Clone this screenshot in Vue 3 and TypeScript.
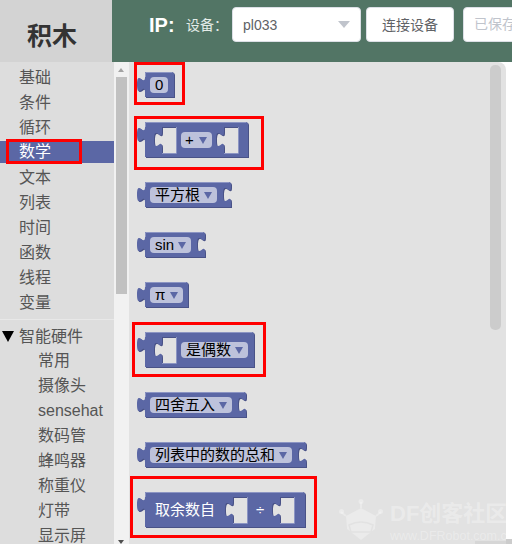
<template>
  <div class="page">
    <header class="topbar">
      <div class="logo">积木</div>
      <div class="tools">
        <span class="ip">IP:</span>
        <span class="device-label">设备：</span>
        <div class="select">
          <span>pl033</span>
          <i class="caret"></i>
        </div>
        <button class="btn">连接设备</button>
        <div class="saved">已保存</div>
      </div>
    </header>

    <div class="main">
      <aside class="side">
        <ul class="cats">
          <li v-for="c in categories" :key="c" class="cat" :class="{ active: c === '数学' }">
            {{ c }}
            <i v-if="c === '数学'" class="mark"></i>
          </li>
        </ul>
        <div class="group-title"><i class="tri"></i>智能硬件</div>
        <ul class="subs">
          <li v-for="s in hardware" :key="s" class="sub">{{ s }}</li>
        </ul>
      </aside>

      <div class="side-scroll">
        <i class="arrow up"></i>
        <div class="side-thumb"></div>
        <i class="arrow down"></i>
      </div>

      <section class="flyout">
        <div v-for="b in blocks" :key="b.id" class="block">
          <svg :width="b.w + 2" :height="b.h" class="block-svg">
            <path :d="blockPath(b)" fill="#495287" fill-rule="evenodd" transform="translate(1 1)" />
            <path :d="blockPath(b)" fill="#5b67a5" fill-rule="evenodd" />
            <path :d="lightPath(b)" fill="none" stroke="#8c95c3" />
            <g v-for="f in b.fields" :key="f.x">
              <rect :x="f.x" :y="(b.h - 16) / 2" :width="f.w" height="16" rx="4" fill="#bdc2db" />
              <text :x="f.tx ?? f.x + 5" :y="b.h / 2 + 5" class="field-text">{{ f.text }}</text>
              <path v-if="f.arrow" :d="arrow(f, b)" fill="#5b67a5" />
            </g>
            <text v-for="l in b.labels" :key="l.x" :x="l.x" :y="b.h / 2 + 5" class="label-text">{{ l.text }}</text>
          </svg>
          <i v-if="b.box" class="red-box" :style="boxStyle(b.box)"></i>
        </div>

        <div class="fly-thumb"></div>
        <div class="fly-hthumb"></div>

        <div class="watermark">
          <svg width="44" height="42" viewBox="0 0 44 42" class="wm-logo">
            <path d="M22 9 L37 17 L36 30 L22 41 L8 30 L7 17 Z" fill="#fff" opacity="0.3" />
            <path d="M10 26 Q22 20 34 26 L32 33 L12 33 Z" fill="none" stroke="#e2e2e2" stroke-width="1.5" />
            <path d="M22 9V3M7 17L2 13M37 17L42 13" stroke="#fff" stroke-width="2" opacity="0.3" />
            <circle cx="22" cy="2.5" r="2.5" fill="#fff" opacity="0.3" />
            <circle cx="2.5" cy="12.5" r="2.5" fill="#fff" opacity="0.3" />
            <circle cx="41.5" cy="12.5" r="2.5" fill="#fff" opacity="0.3" />
          </svg>
          <div class="wm-text">
            <div class="wm-big">DF创客社区</div>
            <div class="wm-small">www.DFRobot.com.cn</div>
          </div>
        </div>
      </section>

      <div class="gutter"><i class="corner"></i></div>
    </div>
  </div>
</template>

<script setup lang="ts">
interface Field {
  x: number;
  w: number;
  text: string;
  arrow?: boolean;
  tx?: number;
}

interface Block {
  id: string;
  w: number;
  h: number;
  holes?: number[];
  notch?: boolean;
  fields?: Field[];
  labels?: { x: number; text: string }[];
  box?: { x: number; y: number; w: number; h: number };
}

const categories = ['基础', '条件', '循环', '数学', '文本', '列表', '时间', '函数', '线程', '变量'];
const hardware = ['常用', '摄像头', 'sensehat', '数码管', '蜂鸣器', '称重仪', '灯带', '显示屏'];

// x values are relative to the left tip of the block
const blocks: Block[] = [
  {
    id: 'num',
    w: 37,
    h: 26,
    fields: [{ x: 13, w: 18, text: '0', tx: 18 }],
    box: { x: -3, y: -10, w: 51, h: 43 },
  },
  {
    id: 'add',
    w: 111,
    h: 36,
    holes: [39, 101],
    fields: [{ x: 44, w: 31, text: '+', arrow: true, tx: 48 }],
    box: { x: -3, y: -6, w: 130, h: 54 },
  },
  {
    id: 'sqrt',
    w: 94,
    h: 26,
    notch: true,
    fields: [{ x: 13, w: 67, text: '平方根', arrow: true }],
  },
  {
    id: 'sin',
    w: 68,
    h: 26,
    notch: true,
    fields: [{ x: 13, w: 41, text: 'sin', arrow: true }],
  },
  {
    id: 'pi',
    w: 51,
    h: 26,
    fields: [{ x: 13, w: 33, text: 'π', arrow: true }],
  },
  {
    id: 'even',
    w: 117,
    h: 36,
    holes: [39],
    fields: [{ x: 44, w: 67, text: '是偶数', arrow: true }],
    box: { x: -5, y: -10, w: 134, h: 55 },
  },
  {
    id: 'round',
    w: 109,
    h: 26,
    notch: true,
    fields: [{ x: 13, w: 82, text: '四舍五入', arrow: true }],
  },
  {
    id: 'sum',
    w: 169,
    h: 26,
    notch: true,
    fields: [{ x: 13, w: 142, text: '列表中的数的总和', arrow: true }],
  },
  {
    id: 'mod',
    w: 168,
    h: 36,
    holes: [110, 157],
    labels: [
      { x: 18, text: '取余数自' },
      { x: 119, text: '÷' },
    ],
    box: { x: -7, y: -16, w: 187, h: 62 },
  },
];

function blockPath(b: Block): string {
  let d = `M8,0 H${b.w - 2} Q${b.w},0 ${b.w},2 `;
  if (b.notch) {
    d += `V5 c0,10 -8,-8 -8,7.5 s8,-2.5 8,7.5 `;
  }
  d += `V${b.h - 1} H8 V20 c0,-10 -8,8 -8,-7.5 s8,2.5 8,-7.5 Z `;
  for (const r of b.holes ?? []) {
    const l = r - 14;
    d += `M${l},5 H${r} V${b.h - 5} H${l} V25 c0,-10 -8,8 -8,-7.5 s8,2.5 8,-7.5 Z `;
  }
  return d;
}

function lightPath(b: Block): string {
  let d = `M8.5,5 V0.5 H${b.w - 2} `;
  for (const r of b.holes ?? []) {
    d += `M${r + 0.5},5 V${b.h - 4.5} H${r - 14} `;
  }
  return d;
}

function arrow(f: Field, b: Block): string {
  const right = f.x + f.w - 5;
  const top = b.h / 2 - 3;
  return `M${right - 8},${top} H${right} L${right - 4},${top + 7} Z`;
}

function boxStyle(r: { x: number; y: number; w: number; h: number }) {
  return {
    left: `${r.x}px`,
    top: `${r.y}px`,
    width: `${r.w}px`,
    height: `${r.h}px`,
  };
}
</script>

<style scoped>
.page {
  width: 512px;
  height: 544px;
  overflow: hidden;
  display: flex;
  flex-direction: column;
  font-family: "Liberation Sans", "Noto Sans CJK SC", sans-serif;
  background: #fff;
}

.topbar {
  height: 62px;
  flex: none;
  display: flex;
  background: #527565;
}

.logo {
  width: 112px;
  flex: none;
  background: #d3d3d3;
  color: #333;
  font-size: 25px;
  font-weight: 700;
  display: flex;
  align-items: center;
  justify-content: center;
  padding: 6px 8px 0 0;
  box-sizing: border-box;
}

.tools {
  flex: 1;
  min-width: 0;
  display: flex;
  align-items: flex-start;
  padding-top: 7px;
  white-space: nowrap;
}

.ip {
  flex: none;
  margin-left: 37px;
  width: 37px;
  line-height: 36px;
  color: #fff;
  font-size: 20px;
  font-weight: 700;
}

.device-label {
  flex: none;
  width: 46px;
  line-height: 36px;
  color: #e4ece8;
  font-size: 14px;
}

.select {
  width: 129px;
  height: 35px;
  flex: none;
  box-sizing: border-box;
  background: #fff;
  border: 1px solid #dcdfe6;
  border-radius: 4px;
  padding: 0 10px;
  display: flex;
  align-items: center;
  justify-content: space-between;
  color: #606266;
  font-size: 14px;
}

.caret {
  width: 0;
  height: 0;
  border-left: 6px solid transparent;
  border-right: 6px solid transparent;
  border-top: 7px solid #c0c4cc;
}

.btn {
  width: 88px;
  height: 35px;
  flex: none;
  margin-left: 5px;
  padding: 0 0 2px;
  background: #fff;
  border: 1px solid #dcdfe6;
  border-radius: 4px;
  color: #606266;
  font-family: inherit;
  font-size: 14px;
}

.saved {
  width: 80px;
  height: 35px;
  flex: none;
  margin-left: 9px;
  box-sizing: border-box;
  padding-left: 10px;
  line-height: 33px;
  background: #fff;
  border: 1px solid #dcdfe6;
  border-radius: 4px;
  color: #c0c4cc;
  font-size: 14px;
}

.main {
  flex: 1;
  min-height: 0;
  display: flex;
}

.side {
  width: 114px;
  flex: none;
  background: #ddd;
  color: #555;
  font-size: 16px;
}

ul {
  list-style: none;
  margin: 0;
  padding: 0;
}

.cats {
  padding: 3px 0 4px;
  border-bottom: 1px solid #e8e8e8;
}

.cat {
  position: relative;
  height: 25px;
  line-height: 25px;
  padding-left: 19px;
}

.cat.active {
  height: 22px;
  line-height: 22px;
  margin: 1px 0 2px;
  background: #5b67a5;
  color: #fff;
}

.mark {
  position: absolute;
  left: 6px;
  top: -2px;
  width: 76px;
  height: 25px;
  box-sizing: border-box;
  border: 3px solid #f00;
}

.group-title {
  height: 28px;
  line-height: 33px;
  padding-left: 19px;
  position: relative;
}

.tri {
  position: absolute;
  left: 2px;
  top: 11px;
  width: 0;
  height: 0;
  border-left: 6px solid transparent;
  border-right: 6px solid transparent;
  border-top: 11px solid #000;
}

.sub {
  height: 25px;
  line-height: 25px;
  padding-left: 38px;
}

.side-scroll {
  width: 15px;
  flex: none;
  background: #f1f1f1;
  position: relative;
}

.side-thumb {
  position: absolute;
  left: 2px;
  top: 15px;
  width: 11px;
  height: 217px;
  background: #c1c1c1;
}

.arrow {
  position: absolute;
  left: 4px;
  width: 0;
  height: 0;
  border-left: 3.5px solid transparent;
  border-right: 3.5px solid transparent;
}

.arrow.up {
  top: 6px;
  border-bottom: 4px solid #a3a3a3;
}

.arrow.down {
  bottom: 0;
  border-top: 4px solid #505050;
}

.flyout {
  flex: 1;
  min-width: 0;
  position: relative;
  background: #e2e2e2;
  border-top-right-radius: 8px;
  padding: 10px 0 0 8px;
  display: flex;
  flex-direction: column;
  align-items: flex-start;
  gap: 24px;
  overflow: hidden;
}

.gutter {
  width: 6px;
  flex: none;
  position: relative;
}

.corner {
  position: absolute;
  left: 0;
  right: 0;
  bottom: 0;
  height: 5px;
  background: #ccc;
}

.block {
  position: relative;
  line-height: 0;
}

.block-svg {
  display: block;
  overflow: visible;
}

.field-text {
  font-size: 15px;
  fill: #000;
}

.label-text {
  font-size: 15px;
  fill: #fff;
}

.red-box {
  position: absolute;
  box-sizing: border-box;
  border: 3px solid #f00;
}

.fly-thumb {
  position: absolute;
  right: 5px;
  top: 3px;
  width: 11px;
  height: 265px;
  border-radius: 5px;
  background: #ccc;
}

.fly-hthumb {
  position: absolute;
  right: 0;
  bottom: 0;
  width: 31px;
  height: 3px;
  background: #d6d6d6;
}

.watermark {
  position: absolute;
  left: 210px;
  top: 437px;
  display: flex;
  gap: 7px;
  white-space: nowrap;
}

.wm-text {
  color: rgba(255, 255, 255, 0.3);
  font-weight: 700;
  padding-top: 2px;
}

.wm-big {
  font-size: 22px;
  line-height: 26px;
}

.wm-small {
  margin-top: 3px;
  font-size: 12.5px;
  line-height: 12px;
  font-weight: 400;
}
</style>
